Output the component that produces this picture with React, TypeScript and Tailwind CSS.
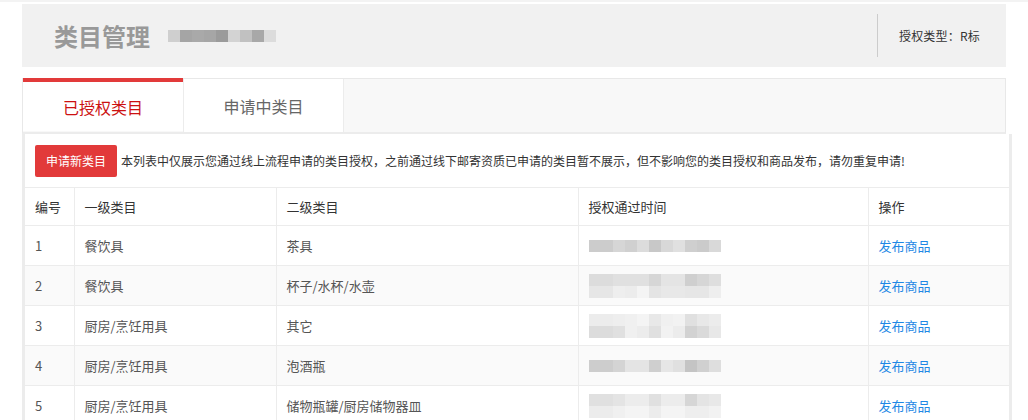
import React from "react";

const headerBlur = [
  "bg-[#cfcfcf]",
  "bg-[#a5a5a5]",
  "bg-[#a9a9a9]",
  "bg-[#a6a6a6]",
  "bg-[#9b9b9b]",
  "bg-[#d3d3d3]",
  "bg-[#c1c1c1]",
  "bg-[#a8a8a8]",
  "bg-[#dcdcdc]",
];

const dateBlurs: string[][][] = [
  [
    ["bg-[#cccccc]", "bg-[#cccccc]", "bg-[#d6d6d6]", "bg-[#d0d0d0]", "bg-[#dcdcdc]", "bg-[#c8c8c8]", "bg-[#d8d8d8]", "bg-[#e0e0e0]", "bg-[#cfcfcf]", "bg-[#cbcbcb]", "bg-[#d9d9d9]"],
  ],
  [
    ["bg-[#dcdcdc]", "bg-[#dcdcdc]", "bg-[#e0e0e0]", "bg-[#e0e0e0]", "bg-[#e0e0e0]", "bg-[#d6d6d6]", "bg-[#e4e4e4]", "bg-[#e4e4e4]", "bg-[#cfcfcf]", "bg-[#d6d6d6]", "bg-[#dedede]"],
    ["bg-[#e6e6e6]", "bg-[#e6e6e6]", "bg-[#eeeeee]", "bg-[#ececec]", "bg-[#f4f4f4]", "bg-[#e4e4e4]", "bg-[#e8e8e8]", "bg-[#e8e8e8]", "bg-[#e6e6e6]", "bg-[#e6e6e6]", "bg-[#eeeeee]"],
  ],
  [
    ["bg-[#ececec]", "bg-[#ececec]", "bg-[#eeeeee]", "bg-[#f0f0f0]", "bg-[#f4f4f4]", "bg-[#e8e8e8]", "bg-[#f0f0f0]", "bg-[#f2f2f2]", "bg-[#e0e0e0]", "bg-[#e8e8e8]", "bg-[#ececec]"],
    ["bg-[#dcdcdc]", "bg-[#dcdcdc]", "bg-[#e0e0e0]", "bg-[#f0f0f0]", "bg-[#ececec]", "bg-[#e0e0e0]", "bg-[#f2f2f2]", "bg-[#ececec]", "bg-[#d2d2d2]", "bg-[#dadada]", "bg-[#e8e8e8]"],
  ],
  [
    ["bg-[#cdcdcd]", "bg-[#cdcdcd]", "bg-[#d4d4d4]", "bg-[#e4e4e4]", "bg-[#e4e4e4]", "bg-[#cfcfcf]", "bg-[#e6e6e6]", "bg-[#e0e0e0]", "bg-[#c4c4c4]", "bg-[#d0d0d0]", "bg-[#dedede]"],
  ],
  [
    ["bg-[#e0e0e0]", "bg-[#e0e0e0]", "bg-[#e4e4e4]", "bg-[#ececec]", "bg-[#ececec]", "bg-[#e0e0e0]", "bg-[#ececec]", "bg-[#ececec]", "bg-[#d6d6d6]", "bg-[#e4e4e4]", "bg-[#e8e8e8]"],
    ["bg-[#ececec]", "bg-[#ececec]", "bg-[#f0f0f0]", "bg-[#f4f4f4]", "bg-[#f4f4f4]", "bg-[#ececec]", "bg-[#f4f4f4]", "bg-[#f4f4f4]", "bg-[#eeeeee]", "bg-[#eeeeee]", "bg-[#f2f2f2]"],
  ],
];

const rows = [
  { id: "1", a: "餐饮具", b: "茶具" },
  { id: "2", a: "餐饮具", b: "杯子/水杯/水壶" },
  { id: "3", a: "厨房/烹饪用具", b: "其它" },
  { id: "4", a: "厨房/烹饪用具", b: "泡酒瓶" },
  { id: "5", a: "厨房/烹饪用具", b: "储物瓶罐/厨房储物器皿" },
];

function Mosaic({ grid }: { grid: string[][] }) {
  return (
    <div className="flex flex-col">
      {grid.map((r, i) => (
        <div key={i} className="flex">
          {r.map((c, j) => (
            <div key={j} className={`w-[12px] h-[12px] ${c}`} />
          ))}
        </div>
      ))}
    </div>
  );
}

export default function App() {
  return (
    <div
      className="w-[1028px] h-[420px] overflow-hidden bg-white border-t-2 border-[#f3f3f3] pt-[2px]"
      style={{ fontFamily: '"Noto Sans CJK SC", "Noto Sans", sans-serif' }}
    >
      <div className="mx-[22px]">
        {/* header */}
        <div className="h-[63px] bg-[#f1f1f1] flex items-center">
          <div className="pl-[32px] text-[24px] font-bold text-[#999999] leading-none">类目管理</div>
          <div className="ml-[18px] flex">
            {headerBlur.map((c, i) => (
              <div key={i} className={`w-[12px] h-[12px] ${c}`} />
            ))}
          </div>
          <div className="ml-auto flex items-center h-[43px] border-l border-[#cccccc] pl-[21px] pr-[26px] text-[12px] text-[#333333] tracking-[0.2px]">
            授权类型：R标
          </div>
        </div>

        {/* tabs */}
        <div className="mt-[11px] h-[56px] bg-[#f8f8f8] border border-[#e8e8e8] border-b-2 border-b-[#ececec] flex">
          <div className="w-[160px] h-full bg-white border-t-4 border-[#e23a3a] -mt-px flex items-center justify-center text-[16px] text-[#cc1111] pt-[1px]">
            已授权类目
          </div>
          <div className="w-[161px] h-full bg-white border-l border-r border-[#ececec] flex items-center justify-center text-[16px] text-[#666666] pt-[1px]">
            申请中类目
          </div>
        </div>

        {/* content */}
        <div className="w-[990px] border-l-[3px] border-r-[3px] border-[#ececec] bg-white">
          <div className="flex items-center pl-[10px] pt-[11px] pb-[10px]">
            <div className="w-[82px] h-[32px] rounded-[2px] bg-[#e23a3a] text-white text-[12px] flex items-center justify-center">
              申请新类目
            </div>
            <div className="ml-[4px] text-[12px] text-[#333333] whitespace-nowrap">
              本列表中仅展示您通过线上流程申请的类目授权，之前通过线下邮寄资质已申请的类目暂不展示，但不影响您的类目授权和商品发布，请勿重复申请!
            </div>
          </div>
          <table className="w-[984px] border-collapse table-fixed text-[13px]">
            <colgroup>
              <col className="w-[49px]" />
              <col className="w-[202px]" />
              <col className="w-[302px]" />
              <col className="w-[290px]" />
              <col className="w-[141px]" />
            </colgroup>
            <thead>
              <tr className="h-[38px] text-[#333333]">
                <th className="border-t border-b border-r border-[#ececec] text-left font-normal pl-[10px]">编号</th>
                <th className="border border-[#ececec] text-left font-normal pl-[10px]">一级类目</th>
                <th className="border border-[#ececec] text-left font-normal pl-[10px]">二级类目</th>
                <th className="border border-[#ececec] text-left font-normal pl-[10px]">授权通过时间</th>
                <th className="border-t border-b border-l border-[#ececec] text-left font-normal pl-[10px]">操作</th>
              </tr>
            </thead>
            <tbody>
              {rows.map((r, i) => (
                <tr key={r.id} className={`h-[40px] text-[#555555] ${i % 2 === 1 ? "bg-[#fafafa]" : "bg-white"}`}>
                  <td className="border-b border-r border-[#ececec] pl-[10px]">{r.id}</td>
                  <td className="border-b border-x border-[#ececec] pl-[10px]">{r.a}</td>
                  <td className="border-b border-x border-[#ececec] pl-[10px]">{r.b}</td>
                  <td className="border-b border-x border-[#ececec] pl-[10px]">
                    <Mosaic grid={dateBlurs[i]} />
                  </td>
                  <td className="border-b border-l border-[#ececec] pl-[10px] text-[#1e88e5]">发布商品</td>
                </tr>
              ))}
            </tbody>
          </table>
        </div>
      </div>
    </div>
  );
}
